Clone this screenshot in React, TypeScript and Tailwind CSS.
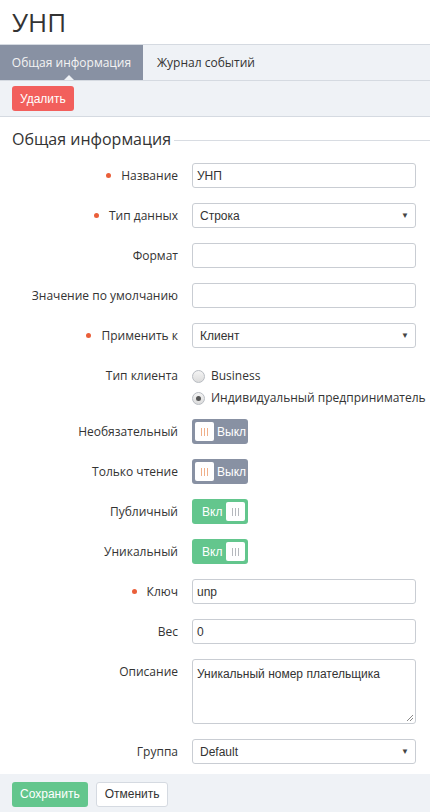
import React from "react";

const label = "text-[12px] text-[#333] font-['Open_Sans',sans-serif] whitespace-nowrap";
const field =
  "h-[25px] w-full rounded-[3px] border border-[#c9cdd3] bg-white px-[4px] text-[12px] text-[#333] font-['Liberation_Sans',Arial,sans-serif] flex items-center";

const Required = () => (
  <span className="mr-[10px] inline-block h-[5px] w-[5px] rounded-full bg-[#ea5f3a]" />
);

const Row = ({
  title,
  required,
  top,
  children,
}: {
  title: string;
  required?: boolean;
  top?: boolean;
  children: React.ReactNode;
}) => (
  <div className={`flex ${top ? "items-start" : "items-center"}`}>
    <div
      className={`flex w-[178px] shrink-0 items-center justify-end ${label} ${
        top ? "pt-[4px]" : ""
      }`}
    >
      {required && <Required />}
      {title}
    </div>
    <div className="ml-[14px] mr-[14px] flex-1">{children}</div>
  </div>
);

const Select = ({ value }: { value: string }) => (
  <div className={`${field} justify-between pl-[7px] pr-[6px]`}>
    <span>{value}</span>
    <span className="text-[8px] text-[#444]">▼</span>
  </div>
);

const Stripes = ({ color }: { color: string }) => (
  <div className="flex gap-[2px]">
    <span className={`h-[8px] w-[1px] ${color}`} />
    <span className={`h-[8px] w-[1px] ${color}`} />
    <span className={`h-[8px] w-[1px] ${color}`} />
  </div>
);

const Toggle = ({ on }: { on: boolean }) =>
  on ? (
    <div className="flex h-[25px] w-[56px] items-center justify-between rounded-[3px] bg-[#63c68d] pl-[10px] pr-[3px]">
      <span className="text-[12px] text-white font-['Liberation_Sans',Arial,sans-serif]">
        Вкл
      </span>
      <div className="flex h-[19px] w-[19px] items-center justify-center rounded-[2px] bg-white">
        <Stripes color="bg-[#b5b8bd]" />
      </div>
    </div>
  ) : (
    <div className="flex h-[25px] w-[56px] items-center rounded-[3px] bg-[#8891a3] pl-[3px]">
      <div className="flex h-[19px] w-[19px] items-center justify-center rounded-[2px] bg-white">
        <Stripes color="bg-[#f0b08a]" />
      </div>
      <span className="ml-[3px] text-[12px] text-white font-['Liberation_Sans',Arial,sans-serif]">
        Выкл
      </span>
    </div>
  );

const Radio = ({ checked, text }: { checked?: boolean; text: string }) => (
  <div className="flex h-[22px] items-center">
    <span className="flex h-[13px] w-[13px] items-center justify-center rounded-full border border-[#b8bcc2] bg-gradient-to-b from-[#f4f4f4] to-[#dcdcdc]">
      {checked && <span className="h-[5px] w-[5px] rounded-full bg-[#555]" />}
    </span>
    <span className={`ml-[6px] ${label}`}>{text}</span>
  </div>
);

export default function App() {
  return (
    <div className="w-[430px] min-h-[812px] bg-white font-['Open_Sans',sans-serif]">
      <div className="flex h-[44px] items-center px-3 text-[26px] text-[#333]">
        УНП
      </div>

      <div className="flex h-[37px] border-y border-[#d5dae1] bg-[#eff2f6] text-[12px]">
        <div className="relative flex w-[143px] items-center justify-center bg-[#8891a3] text-[#f4f4f4]">
          Общая информация
          <span className="absolute bottom-0 left-[64px] h-0 w-0 border-x-[5px] border-b-[5px] border-x-transparent border-b-[#eff2f6]" />
        </div>
        <div className="flex items-center px-[14px] text-[#333]">
          Журнал событий
        </div>
      </div>

      <div className="flex h-[36px] items-center border-b border-[#d5dae1] bg-[#eff2f6] px-3">
        <button className="h-[25px] rounded-[3px] bg-[#f25f5c] px-[8px] text-[12px] text-white font-['Liberation_Sans',Arial,sans-serif]">
          Удалить
        </button>
      </div>

      <div className="flex items-center pl-3 pt-[10px]">
        <span className="text-[16px] text-[#333]">Общая информация</span>
        <span className="ml-[3px] mt-[3px] h-px flex-1 bg-[#d8dce2]" />
      </div>

      <div className="mt-[12px] flex flex-col gap-[15px]">
        <Row title="Название" required>
          <div className={field}>УНП</div>
        </Row>
        <Row title="Тип данных" required>
          <Select value="Строка" />
        </Row>
        <Row title="Формат">
          <div className={field} />
        </Row>
        <Row title="Значение по умолчанию">
          <div className={field} />
        </Row>
        <Row title="Применить к" required>
          <Select value="Клиент" />
        </Row>
        <Row title="Тип клиента" top>
          <div className="mb-[-5px] mt-[2px] flex flex-col">
            <Radio text="Business" />
            <Radio checked text="Индивидуальный предприниматель" />
          </div>
        </Row>
        <Row title="Необязательный">
          <Toggle on={false} />
        </Row>
        <Row title="Только чтение">
          <Toggle on={false} />
        </Row>
        <Row title="Публичный">
          <Toggle on />
        </Row>
        <Row title="Уникальный">
          <Toggle on />
        </Row>
        <Row title="Ключ" required>
          <div className={field}>unp</div>
        </Row>
        <Row title="Вес">
          <div className={field}>0</div>
        </Row>
        <Row title="Описание" top>
          <div className="relative h-[65px] w-full rounded-[3px] border border-[#c9cdd3] bg-white px-[4px] pt-[5px] text-[12px] text-[#333] font-['Liberation_Sans',Arial,sans-serif]">
            Уникальный номер плательщика
            <svg
              className="absolute bottom-[2px] right-[2px]"
              width="7"
              height="7"
              viewBox="0 0 7 7"
            >
              <path d="M1 7 L7 1 M4 7 L7 4" stroke="#888" strokeWidth="1" />
            </svg>
          </div>
        </Row>
        <Row title="Группа">
          <Select value="Default" />
        </Row>
      </div>

      <div className="mt-[10px] flex h-[39px] items-center gap-[8px] bg-[#eff2f6] px-3 pt-[1px]">
        <button className="h-[25px] rounded-[3px] bg-[#63c68d] px-[8px] text-[12px] text-white font-['Liberation_Sans',Arial,sans-serif]">
          Сохранить
        </button>
        <button className="h-[25px] rounded-[3px] border border-[#d5dae1] bg-white px-[8px] text-[12px] text-[#333] font-['Liberation_Sans',Arial,sans-serif]">
          Отменить
        </button>
      </div>
    </div>
  );
}
